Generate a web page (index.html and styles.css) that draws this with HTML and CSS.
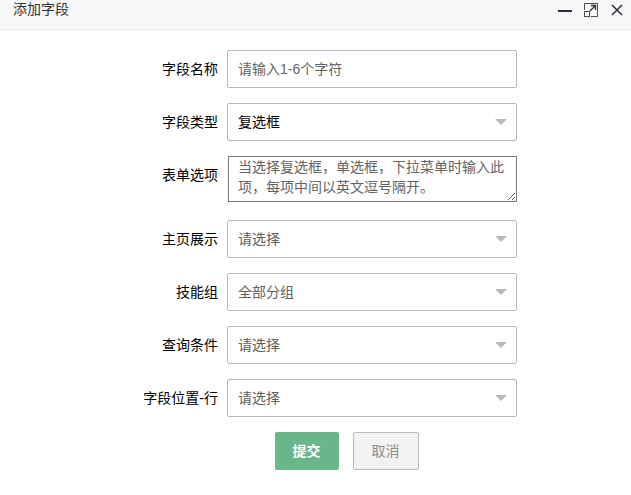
FILE: index.html
```html
<!DOCTYPE html>
<html lang="zh-CN">
<head>
<meta charset="utf-8">
<meta name="viewport" content="width=device-width, initial-scale=1">
<title>添加字段</title>
<link rel="stylesheet" href="styles.css">
</head>
<body>
<header class="titlebar">
  <h1 class="title">添加字段</h1>
  <div class="window-actions">
    <button class="icon-button" type="button" aria-label="最小化">
      <svg width="14" height="16" viewBox="0 0 14 16"><path d="M0 9h14" stroke="#2d2c3b" stroke-width="2"/></svg>
    </button>
    <button class="icon-button" type="button" aria-label="最大化">
      <svg width="14" height="16" viewBox="0 0 14 16" fill="none" stroke="#2d2c3b"><path d="M.5 8V1.500h13v13H7" stroke="#4d4c58"/><rect x=".5" y="9.500" width="5" height="5" stroke="#4d4c58"/><path d="M6 9l5-5M7 3.500h4.500V8" stroke-width="1.300"/></svg>
    </button>
    <button class="icon-button" type="button" aria-label="关闭">
      <svg width="13" height="16" viewBox="0 0 13 16"><path d="M2 3l10 10M12 3L2 13" stroke="#2d2c3b" stroke-width="1.500"/></svg>
    </button>
  </div>
</header>
<form class="form">
  <div class="row">
    <label class="label" for="name">字段名称</label>
    <input class="control" id="name" type="text" placeholder="请输入1-6个字符">
  </div>
  <div class="row">
    <label class="label" for="type">字段类型</label>
    <div class="select-box"><select class="control chosen" id="type"><option>复选框</option></select></div>
  </div>
  <div class="row row-options">
    <label class="label" for="options">表单选项</label>
    <textarea class="options" id="options" placeholder="当选择复选框，单选框，下拉菜单时输入此项，每项中间以英文逗号隔开。"></textarea>
  </div>
  <div class="row">
    <label class="label" for="home">主页展示</label>
    <div class="select-box"><select class="control" id="home"><option>请选择</option></select></div>
  </div>
  <div class="row">
    <label class="label" for="group">技能组</label>
    <div class="select-box"><select class="control" id="group"><option>全部分组</option></select></div>
  </div>
  <div class="row">
    <label class="label" for="query">查询条件</label>
    <div class="select-box"><select class="control" id="query"><option>请选择</option></select></div>
  </div>
  <div class="row">
    <label class="label" for="position">字段位置-行</label>
    <div class="select-box"><select class="control" id="position"><option>请选择</option></select></div>
  </div>
  <div class="buttons">
    <button class="button submit" type="submit">提交</button>
    <button class="button cancel" type="button">取消</button>
  </div>
</form>
</body>
</html>
```
FILE: styles.css
```css
* {
  box-sizing: border-box;
}

body {
  margin: 0;
  background: #fff;
  color: #000;
  font: 14px/20px "Liberation Sans", "Noto Sans CJK SC", sans-serif;
}

input,
select,
textarea,
button {
  margin: 0;
  font: inherit;
}

.titlebar {
  display: flex;
  justify-content: space-between;
  align-items: flex-start;
  height: 30px;
  padding: 0 8px 0 13px;
  border-bottom: 1px solid #e8e8e8;
  background: #f7f7f7;
}

.title {
  margin: 0;
  color: #333;
  font-size: 14px;
  font-weight: 400;
  line-height: 18px;
}

.window-actions {
  display: flex;
  gap: 12px;
  padding-top: 2px;
}

.icon-button {
  display: flex;
  padding: 0;
  border: 0;
  background: none;
}

.form {
  display: flex;
  flex-direction: column;
  gap: 15px;
  padding: 20px 16px;
}

.row {
  display: grid;
  grid-template-columns: 104px 290px;
  column-gap: 9px;
  justify-content: center;
}

.row-options {
  padding-bottom: 3px;
}

.label {
  line-height: 38px;
  text-align: right;
}

.control {
  display: block;
  width: 100%;
  height: 38px;
  padding: 0 10px;
  border: 1px solid #b9b9b9;
  border-radius: 2px;
  background: #fff;
  color: #606060;
  appearance: none;
}

.chosen {
  color: #000;
}

.select-box {
  position: relative;
}

.select-box::after {
  content: "";
  position: absolute;
  top: 16px;
  right: 10px;
  border: 6px solid transparent;
  border-top-color: #b9b9b9;
  border-bottom: 0;
  pointer-events: none;
}

.options {
  display: block;
  height: 46px;
  margin-left: 1px;
  padding: 0 10px 0 9px;
  border: 1px solid #777;
  background: #fff;
  resize: both;
  overflow: auto;
}

::placeholder {
  color: #646464;
  opacity: 1;
}

.buttons {
  display: flex;
  justify-content: center;
  gap: 14px;
  padding-left: 62px;
}

.button {
  height: 38px;
  padding: 0 18px;
  border: 0;
  border-radius: 2px;
}

.submit {
  background: #6ab68b;
  color: #fff;
  font-weight: 700;
}

.cancel {
  border: 1px solid #b9b9b9;
  background: #f2f2f2;
  color: #8c8c8c;
}
```
